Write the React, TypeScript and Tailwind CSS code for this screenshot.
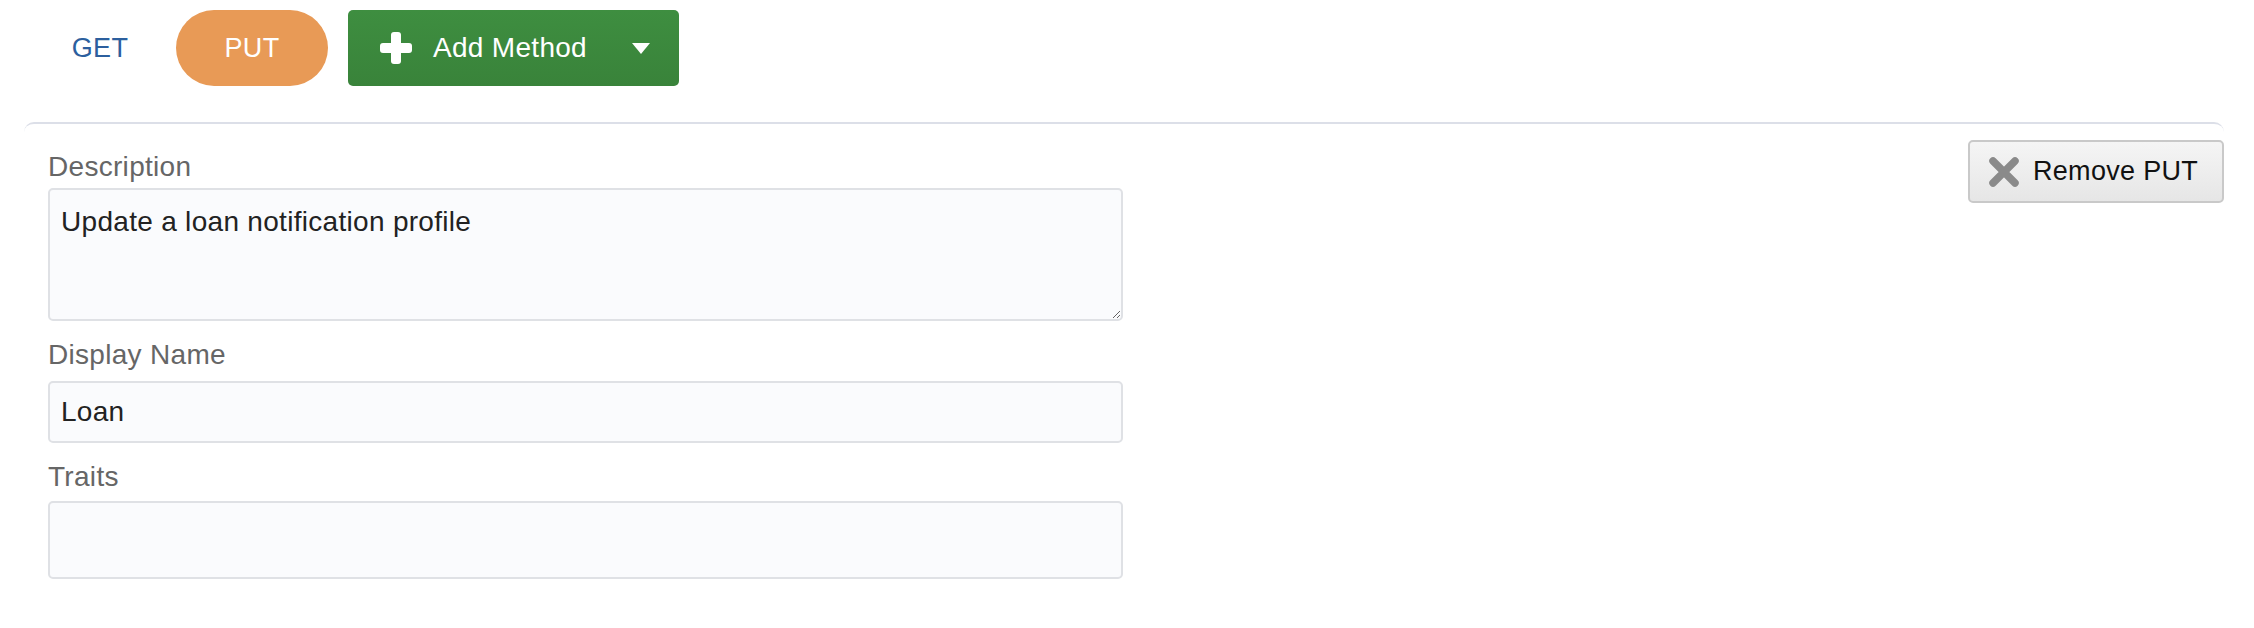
import { useState } from 'react';

const PlusIcon = () => (
    <svg width="32" height="32" viewBox="0 0 32 32">
        <rect x="11" y="0" width="10" height="32" rx="3" fill="#ffffff" />
        <rect x="0" y="11" width="32" height="10" rx="3" fill="#ffffff" />
    </svg>
);

const CaretIcon = () => (
    <svg width="18" height="11" viewBox="0 0 18 11">
        <polygon points="0,0 18,0 9,11" fill="#ffffff" />
    </svg>
);

const CloseIcon = () => (
    <svg width="32" height="30" viewBox="0 0 32 30" fill="none">
        <path d="M5 4 L27 26 M27 4 L5 26" stroke="#8a8a8a" strokeWidth="7.5" strokeLinecap="round" />
    </svg>
);

export default function App() {
    const [method, setMethod] = useState('PUT');
    const [description, setDescription] = useState('Update a loan notification profile');
    const [displayName, setDisplayName] = useState('Loan');
    const [traits, setTraits] = useState('');

    return (
        <div className="w-[2254px] h-[628px] bg-white font-['Liberation_Sans',Arial,sans-serif] tracking-[0.3px]">
            {/* pestañas de métodos */}
            <div className="flex items-center pl-6 pt-[10px]">
                {['GET', 'PUT'].map(m => (
                    <button
                        key={m}
                        type="button"
                        onClick={() => setMethod(m)}
                        className={
                            m === method
                                ? 'w-[152px] h-[76px] rounded-full bg-[#e89a56] text-white text-[27px]'
                                : 'w-[152px] h-[76px] rounded-full text-[#2c5f9e] text-[27px]'
                        }
                    >
                        {m}
                    </button>
                ))}
                <button
                    type="button"
                    className="ml-5 w-[331px] h-[76px] flex items-center pl-[32px] pr-[29px] rounded-[5px] bg-gradient-to-b from-[#3e8e40] to-[#39833a] text-white text-[28px]"
                >
                    <PlusIcon />
                    <span className="ml-[21px]">Add Method</span>
                    <span className="ml-auto flex"><CaretIcon /></span>
                </button>
            </div>

            {/* tarjeta del método */}
            <div className="mt-[36px] ml-6 w-[2200px] border-t-2 border-[#dcdfe8] rounded-t-[10px] flex items-start pl-6">
                <div className="w-[1075px] pt-[25px] text-[28px]">
                    <label className="block leading-9 text-[#666666]">Description</label>
                    <textarea
                        className="block mt-[3px] w-full h-[133px] border-2 border-[#dfe1e5] rounded-[5px] bg-[#fafbfd] pt-[14px] px-[11px] leading-9 text-[#222222] outline-none"
                        value={description}
                        onChange={e => setDescription(e.target.value)}
                    />

                    <label className="block mt-4 leading-9 text-[#666666]">Display Name</label>
                    <input
                        className="block mt-2 w-full h-[62px] border-2 border-[#dfe1e5] rounded-[5px] bg-[#fafbfd] px-[11px] text-[#222222] outline-none"
                        value={displayName}
                        onChange={e => setDisplayName(e.target.value)}
                    />

                    <label className="block mt-4 leading-9 text-[#666666]">Traits</label>
                    <input
                        className="block mt-[6px] w-full h-[78px] border-2 border-[#dfe1e5] rounded-[5px] bg-[#fafbfd] px-[11px] text-[#222222] outline-none"
                        value={traits}
                        onChange={e => setTraits(e.target.value)}
                    />
                </div>

                <button
                    type="button"
                    className="ml-auto mt-4 w-[256px] h-[63px] flex items-center pl-[18px] border-2 border-[#c9c9c9] rounded-[5px] bg-gradient-to-b from-[#f5f5f5] to-[#e6e6e6] text-[27px] text-[#111111]"
                >
                    <CloseIcon />
                    <span className="ml-[13px]">Remove {method}</span>
                </button>
            </div>
        </div>
    );
}
